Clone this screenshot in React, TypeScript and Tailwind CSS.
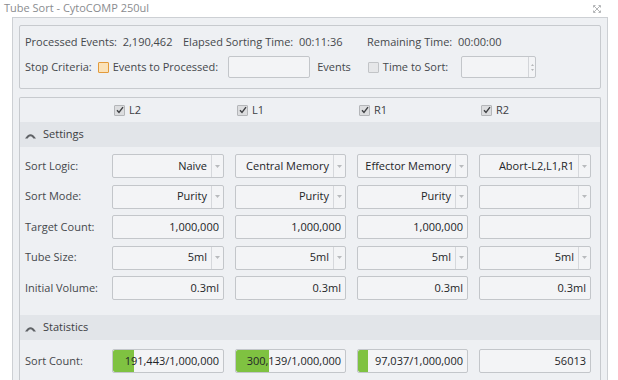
import React from 'react'

const font = { fontFamily: '"Open Sans", "Noto Sans", sans-serif' }

type Cell = {
    text?: string
    drop?: boolean
}

const cols = ['w-[112px]', 'w-[111px]', 'w-[111px]', 'w-[112px]']

const rows: { label: string; cells: Cell[] }[] = [
    {
        label: 'Sort Logic:',
        cells: [
            { text: 'Naive', drop: true },
            { text: 'Central Memory', drop: true },
            { text: 'Effector Memory', drop: true },
            { text: 'Abort-L2,L1,R1', drop: true },
        ],
    },
    {
        label: 'Sort Mode:',
        cells: [
            { text: 'Purity', drop: true },
            { text: 'Purity', drop: true },
            { text: 'Purity', drop: true },
            { text: '', drop: true },
        ],
    },
    {
        label: 'Target Count:',
        cells: [{ text: '1,000,000' }, { text: '1,000,000' }, { text: '1,000,000' }, { text: '' }],
    },
    {
        label: 'Tube Size:',
        cells: [
            { text: '5ml', drop: true },
            { text: '5ml', drop: true },
            { text: '5ml', drop: true },
            { text: '5ml', drop: true },
        ],
    },
    {
        label: 'Initial Volume:',
        cells: [{ text: '0.3ml' }, { text: '0.3ml' }, { text: '0.3ml' }, { text: '0.3ml' }],
    },
]

const sortCounts = [
    { text: '191,443/1,000,000', bar: 21 },
    { text: '300,139/1,000,000', bar: 33 },
    { text: '97,037/1,000,000', bar: 10 },
    { text: '56013', bar: 0 },
]

function Chevron() {
    return (
        <svg width="11" height="8" viewBox="0 0 11 8" className="shrink-0">
            <path d="M0 7.5 Q5.5 -1 11 7.5 L8.4 7.5 Q5.5 3.2 2.6 7.5 Z" fill="#5f6266" />
        </svg>
    )
}

function Check({ checked = true }: { checked?: boolean }) {
    return (
        <span className="w-[11px] h-[11px] border border-[#b4b6b9] bg-[#dcdddf] rounded-[1px] flex items-center justify-center">
            {checked && (
                <svg width="8" height="8" viewBox="0 0 8 8">
                    <path d="M1 4.2 L3 6.5 L7 1.2" stroke="#3e4043" strokeWidth="1.4" fill="none" />
                </svg>
            )}
        </span>
    )
}

function Field({ cell, w }: { cell: Cell; w: string }) {
    return (
        <div className={`${w} h-[24px] border border-[#c3c6ca] bg-[#f3f4f6] rounded-[2px] flex text-[#232528]`}>
            <div className="flex-1 min-w-0 flex items-center justify-end pr-[4px] whitespace-nowrap overflow-hidden">
                {cell.text}
            </div>
            {cell.drop && (
                <div className="w-[12px] border-l border-[#d6d8dc] flex items-center justify-center">
                    <svg width="5" height="3" viewBox="0 0 5 3">
                        <path d="M0 0 L5 0 L2.5 3 Z" fill="#b8babd" />
                    </svg>
                </div>
            )}
        </div>
    )
}

function Band({ title }: { title: string }) {
    return (
        <div className="h-[25px] shrink-0 bg-[#e2e5e9] flex items-center gap-[7px] pl-[5px] text-[#3d4043]">
            <Chevron />
            <span>{title}</span>
        </div>
    )
}

export default function App() {
    return (
        <div className="w-[618px] h-[380px] bg-white overflow-hidden text-[11px] text-[#45484c]" style={font}>
            <div className="h-[17px] flex items-center justify-between pl-[4px] pr-[17px] text-[#8a8c8f]">
                <span>Tube Sort - CytoCOMP 250ul</span>
                <svg width="8" height="8" viewBox="0 0 8 8">
                    <path d="M1 1 L7 7 M7 1 L1 7 M0.5 2.5 L0.5 0.5 L2.5 0.5 M5.5 0.5 L7.5 0.5 L7.5 2.5 M7.5 5.5 L7.5 7.5 L5.5 7.5 M2.5 7.5 L0.5 7.5 L0.5 5.5" stroke="#a0a2a5" strokeWidth="0.8" fill="none" />
                </svg>
            </div>
            <div className="ml-[12px] w-[596px] h-[363px] border-l border-t border-r border-[#cdd0d4] bg-[#eef0f3] px-[6px] pt-[7px] flex flex-col gap-[8px]">
                <div className="h-[64px] shrink-0 border border-[#c7cace] rounded-[2px] pl-[5px] pt-[8px] flex flex-col gap-[6px]">
                    <div className="h-[16px] flex items-center">
                        <span className="w-[158px]">Processed Events:&nbsp; 2,190,462</span>
                        <span className="w-[184px]">Elapsed Sorting Time:&nbsp; 00:11:36</span>
                        <span>Remaining Time:&nbsp; 00:00:00</span>
                    </div>
                    <div className="h-[22px] flex items-center">
                        <span>Stop Criteria:</span>
                        <span className="ml-[6px] w-[11px] h-[11px] border border-[#e39b3c] bg-[#fbe2b8] rounded-[1px]" />
                        <span className="ml-[4px]">Events to Processed:</span>
                        <span className="ml-[10px] w-[82px] h-[22px] border border-[#c3c6ca] bg-[#f3f4f6] rounded-[2px]" />
                        <span className="ml-[7px]">Events</span>
                        <span className="ml-[17px] w-[11px] h-[11px] border border-[#c2c4c7] bg-[#e6e7e9] rounded-[1px]" />
                        <span className="ml-[4px]">Time to Sort:</span>
                        <span className="ml-[13px] w-[75px] h-[22px] border border-[#c3c6ca] bg-[#f3f4f6] rounded-[2px] flex justify-end">
                            <span className="w-[7px] border-l border-[#d3d5d9] flex flex-col items-center justify-center gap-[3px]">
                                <svg width="3" height="2" viewBox="0 0 3 2"><path d="M0 2 L1.5 0 L3 2 Z" fill="#b5b7ba" /></svg>
                                <svg width="3" height="2" viewBox="0 0 3 2"><path d="M0 0 L3 0 L1.5 2 Z" fill="#b5b7ba" /></svg>
                            </span>
                        </span>
                    </div>
                </div>
                <div className="flex-1 border border-[#c7cace] border-b-0 rounded-t-[2px] flex flex-col">
                    <div className="h-[24px] shrink-0 flex items-center">
                        <div className="w-[92px]" />
                        <div className="flex gap-[11px]">
                            {['L2', 'L1', 'R1', 'R2'].map((l, i) => (
                                <div key={l} className={`${cols[i]} flex items-center gap-[4px] pl-[2px] text-[#3d4043]`}>
                                    <Check />
                                    <span>{l}</span>
                                </div>
                            ))}
                        </div>
                    </div>
                    <Band title="Settings" />
                    <div className="pt-[7px] flex flex-col gap-[6.5px]">
                        {rows.map((r) => (
                            <div key={r.label} className="flex items-center">
                                <div className="w-[92px] pl-[5px]">{r.label}</div>
                                <div className="flex gap-[11px]">
                                    {r.cells.map((c, i) => (
                                        <Field key={i} cell={c} w={cols[i]} />
                                    ))}
                                </div>
                            </div>
                        ))}
                    </div>
                    <div className="mt-[15px]">
                        <Band title="Statistics" />
                    </div>
                    <div className="pt-[9px] flex items-center">
                        <div className="w-[92px] pl-[5px]">Sort Count:</div>
                        <div className="flex gap-[11px]">
                            {sortCounts.map((s, i) => (
                                <div key={i} className={`${cols[i]} h-[24px] border border-[#c3c6ca] bg-[#f3f4f6] rounded-[2px] relative overflow-hidden text-[#232528]`}>
                                    {s.bar > 0 && (
                                        <div className="absolute left-0 top-0 bottom-0 bg-[#7fc241] rounded-l-[2px]" style={{ width: s.bar }} />
                                    )}
                                    <div className="relative h-full flex items-center justify-end pr-[4px]">{s.text}</div>
                                </div>
                            ))}
                        </div>
                    </div>
                </div>
            </div>
        </div>
    )
}
